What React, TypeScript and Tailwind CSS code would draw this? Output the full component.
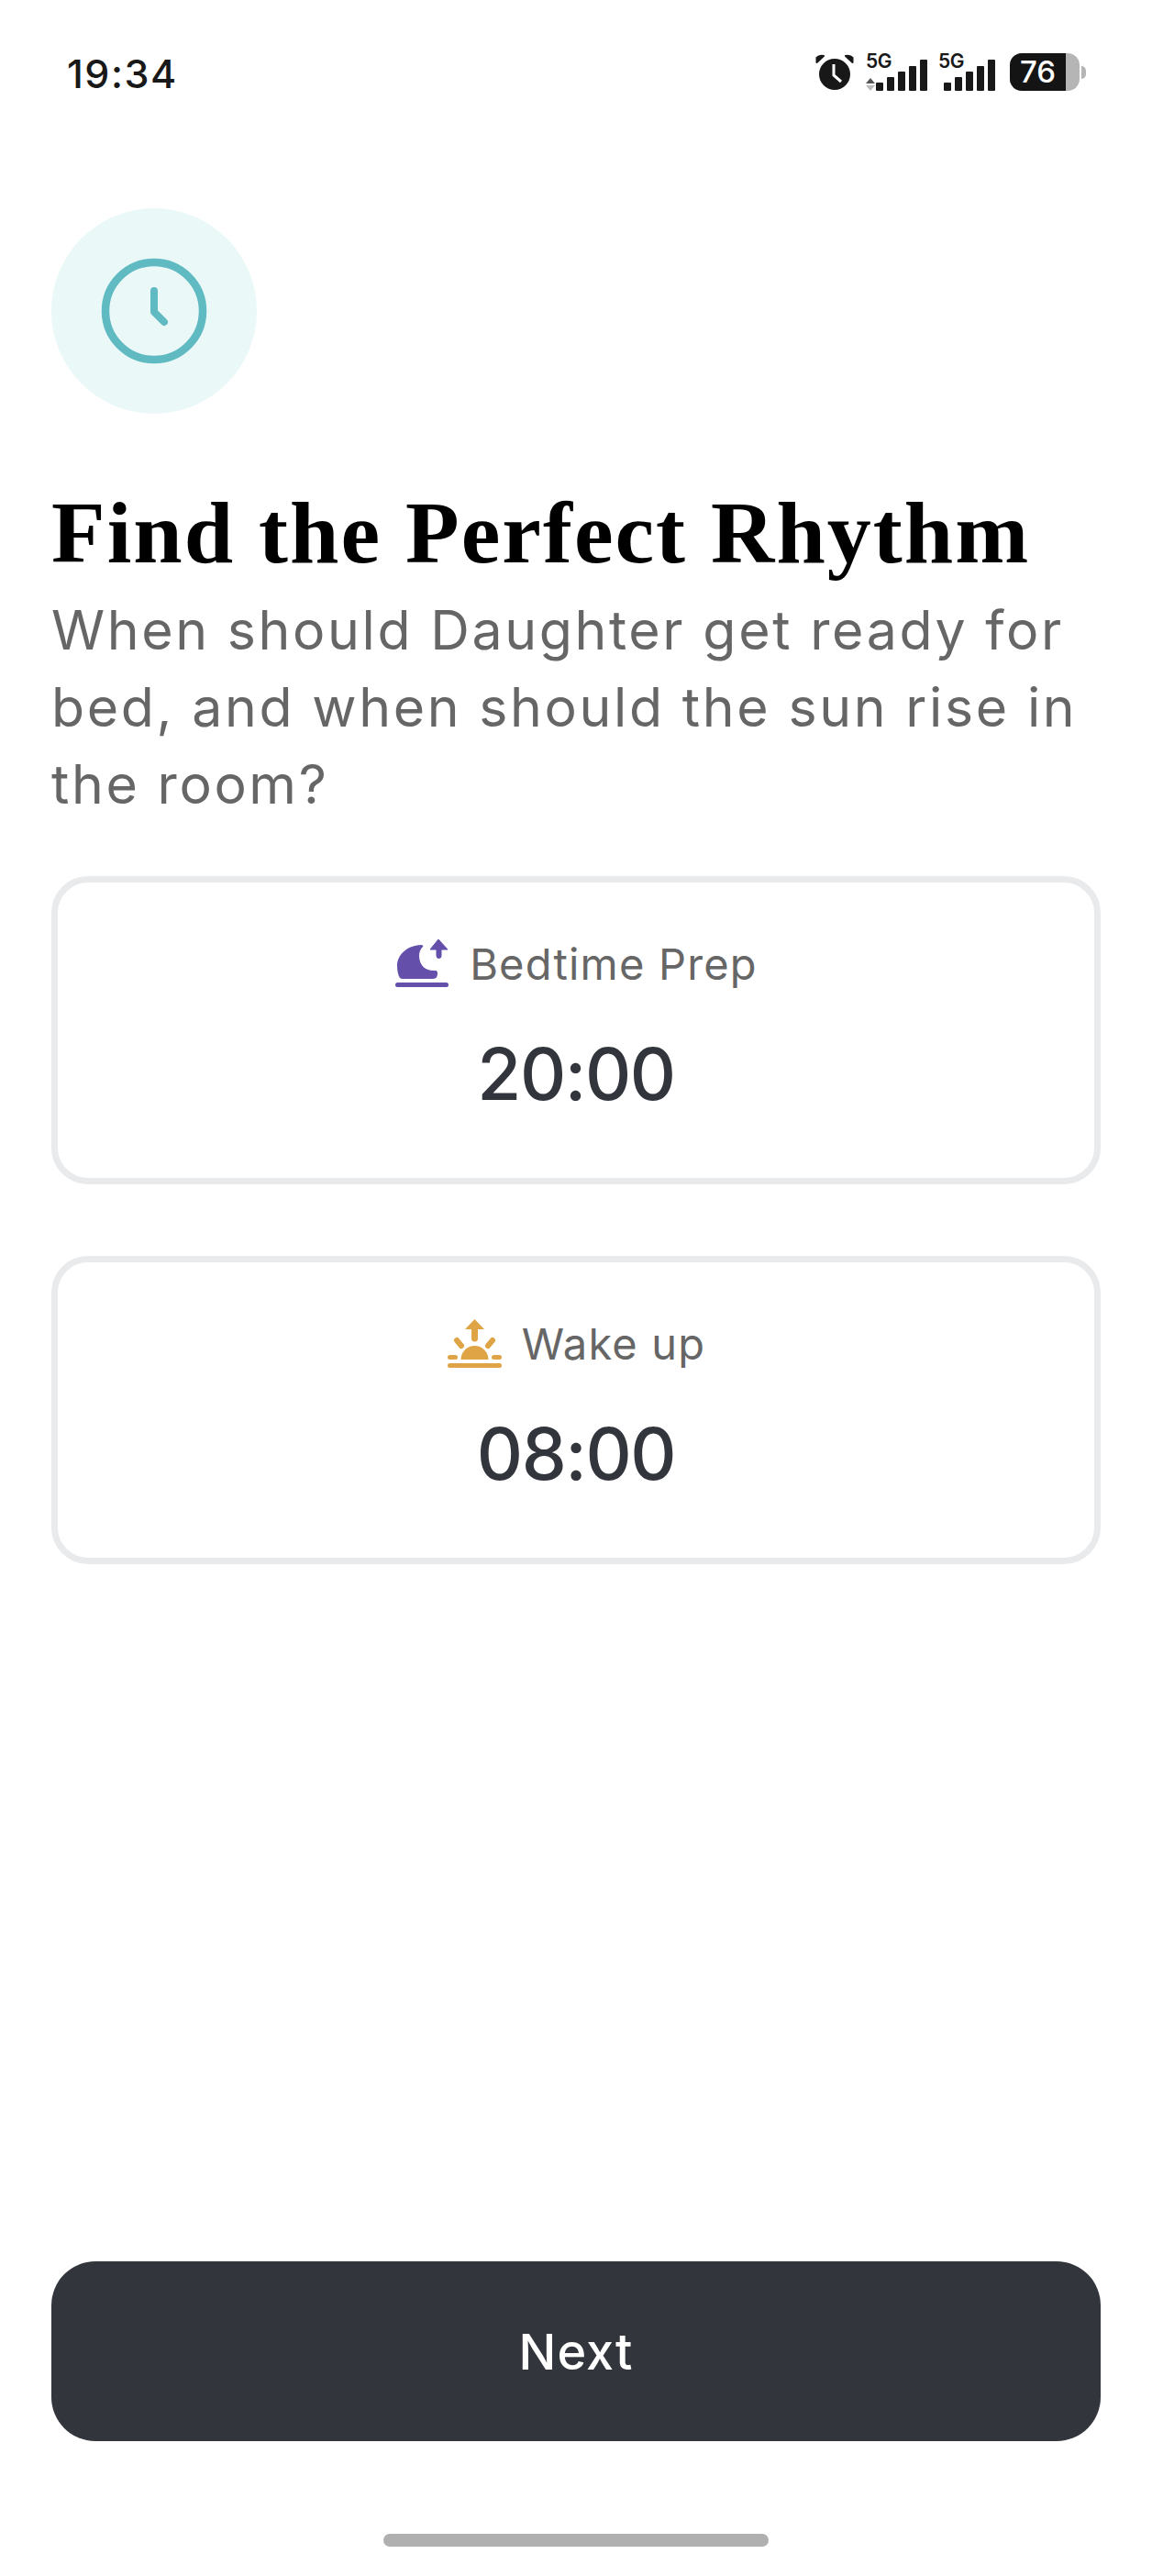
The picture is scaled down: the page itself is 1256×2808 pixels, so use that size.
import React from 'react';

function StatusIcons() {
  return (
    <div className="flex items-center pr-[16px]">
      {/* alarm */}
      <svg width="42" height="40" viewBox="0 0 42 40" className="mr-[13px]">
        <circle cx="21" cy="22" r="17" fill="#181818" />
        <path d="M20 11v12l8 7" stroke="#fff" strokeWidth="3" fill="none" />
        <path d="M1.500 9 L9 2 Q4 1 1.500 4 Z M40.500 9 L33 2 Q38 1 40.500 4 Z" fill="#181818" stroke="#181818" strokeWidth="2" strokeLinejoin="round" />
      </svg>
      <Signal arrows />
      <div className="w-[12px]" />
      <Signal />
      {/* battery */}
      <div className="ml-[16px] flex items-center">
        <div className="flex h-[41px] w-[76px] overflow-hidden rounded-[13px] bg-[#b5b5b5]">
          <div className="flex w-[61px] items-center justify-center bg-[#141414] text-[33px] leading-none font-medium text-white">
            76
          </div>
        </div>
        <div className="ml-[2px] h-[14px] w-[5px] rounded-r-full bg-[#b5b5b5]" />
      </div>
    </div>
  );
}

function Signal({ arrows }: { arrows?: boolean }) {
  return (
    <div className={`relative h-[40px] ${arrows ? 'w-[67px]' : 'w-[62px]'}`}>
      <span className="absolute top-[-4px] left-0 text-[21px] leading-[24px] font-semibold tracking-[-0.5px] text-[#181818]">
        5G
      </span>
      {arrows && (
        <svg width="10" height="14" viewBox="0 0 10 14" className="absolute bottom-[0px] left-0">
          <path d="M5 0l5 6H0z" fill="#555" />
          <path d="M5 14l5-6H0z" fill="#bbb" />
        </svg>
      )}
      <div className="absolute right-0 bottom-0 flex items-end gap-[4px]">
        <div className="h-[9px] w-[8px] rounded-[1px] bg-[#181818]" />
        <div className="h-[15px] w-[8px] rounded-[1px] bg-[#181818]" />
        <div className="h-[21px] w-[8px] rounded-[1px] bg-[#181818]" />
        <div className="h-[27px] w-[8px] rounded-[1px] bg-[#181818]" />
        <div className="h-[34px] w-[8px] rounded-[1px] bg-[#181818]" />
      </div>
    </div>
  );
}

function MoonIcon() {
  return (
    <svg width="60" height="54" viewBox="0 0 60 54">
      <path d="M29 7 C13 8 3 18 3 30 C3 35 4 40 6 43 Q7 44 9 44 H42 C46 44 47 41 47 38 Q47 35 45 35 C35 36 27 30 27 19 C27 15 28 12 31 9 C32 8 31 7 29 7 Z" fill="#6450ab" />
      <rect x="1" y="48" width="58" height="5" rx="2.500" fill="#6450ab" />
      <path d="M48 1 L58 12 H51 V19 a2.500 2.500 0 0 1 -5 0 V12 H39 Z" fill="#6450ab" stroke="#6450ab" strokeWidth="1" strokeLinejoin="round" />
    </svg>
  );
}

function SunIcon() {
  return (
    <svg width="60" height="54" viewBox="0 0 60 54">
      <path d="M30.500 1 L41 12 H34 V22 a3.500 3.500 0 0 1 -7 0 V12 H20 Z" fill="#dfa445" />
      <path d="M15.500 45 a15 15 0 0 1 30 0 Z" fill="#dfa445" />
      <rect x="1" y="49" width="59" height="5" rx="2.500" fill="#dfa445" />
      <rect x="1" y="40" width="11" height="5" rx="2.500" fill="#dfa445" />
      <rect x="49" y="40" width="11" height="5" rx="2.500" fill="#dfa445" />
      <path d="M11 24 L16 30 M50 24 L45 30" stroke="#dfa445" strokeWidth="6" strokeLinecap="round" />
    </svg>
  );
}

function TimeCard({ icon, label, time }: { icon: React.ReactNode; label: string; time: string }) {
  return (
    <div className="flex h-[336px] flex-col items-center rounded-[40px] border-[7px] border-[#e9eaec] pt-[61px]">
      <div className="flex h-[54px] items-center gap-[22px]">
        {icon}
        <span className="text-[47px] leading-none tracking-[1.2px] text-[#666666]">{label}</span>
      </div>
      <div className="mt-[44px] text-[78px] leading-[100px] font-medium tracking-[-1.5px] text-[#33353d]">
        {time}
      </div>
    </div>
  );
}

export default function App() {
  return (
    <div className="flex h-[2808px] w-[1256px] flex-col bg-white px-[56px] font-['Inter',sans-serif] [font-feature-settings:'calt'_0]">
      {/* status bar */}
      <div className="flex h-[160px] items-start justify-between pt-[58px]">
        <span className="pl-[17px] text-[43px] leading-[44px] font-medium tracking-[1.5px] text-[#181818]">19:34</span>
        <StatusIcons />
      </div>

      {/* clock badge */}
      <div className="mt-[67px] flex h-[224px] w-[224px] items-center justify-center rounded-full bg-[#ebf8f8]">
        <svg width="120" height="120" viewBox="0 0 120 120" fill="none" stroke="#5fbac1" strokeLinecap="round" strokeLinejoin="round">
          <circle cx="60" cy="60" r="53" strokeWidth="8.500" />
          <path d="M60 38 V61 L71 72" strokeWidth="8" />
        </svg>
      </div>

      <h1 className="mt-[75px] font-['Liberation_Serif',serif] text-[96px] leading-[110px] font-bold tracking-[2px] text-black">
        Find the Perfect Rhythm
      </h1>

      <p className="mt-[9px] text-[59px] leading-[84px] tracking-[2.6px] text-[#666666]">
        When should Daughter get ready for
        <br />
        bed, and when should the sun rise in
        <br />
        the room?
      </p>

      <div className="mt-[58px] flex flex-col gap-[78px]">
        <TimeCard icon={<MoonIcon />} label="Bedtime Prep" time="20:00" />
        <TimeCard icon={<SunIcon />} label="Wake up" time="08:00" />
      </div>

      <div className="flex-1" />

      <button className="flex h-[196px] items-center justify-center rounded-[48px] bg-[#33353d] text-[54px] font-medium tracking-[1px] text-white">
        Next
      </button>

      <div className="mt-[101px] mb-[32px] h-[14px] w-[420px] self-center rounded-full bg-[#b0b0b0]" />
    </div>
  );
}
